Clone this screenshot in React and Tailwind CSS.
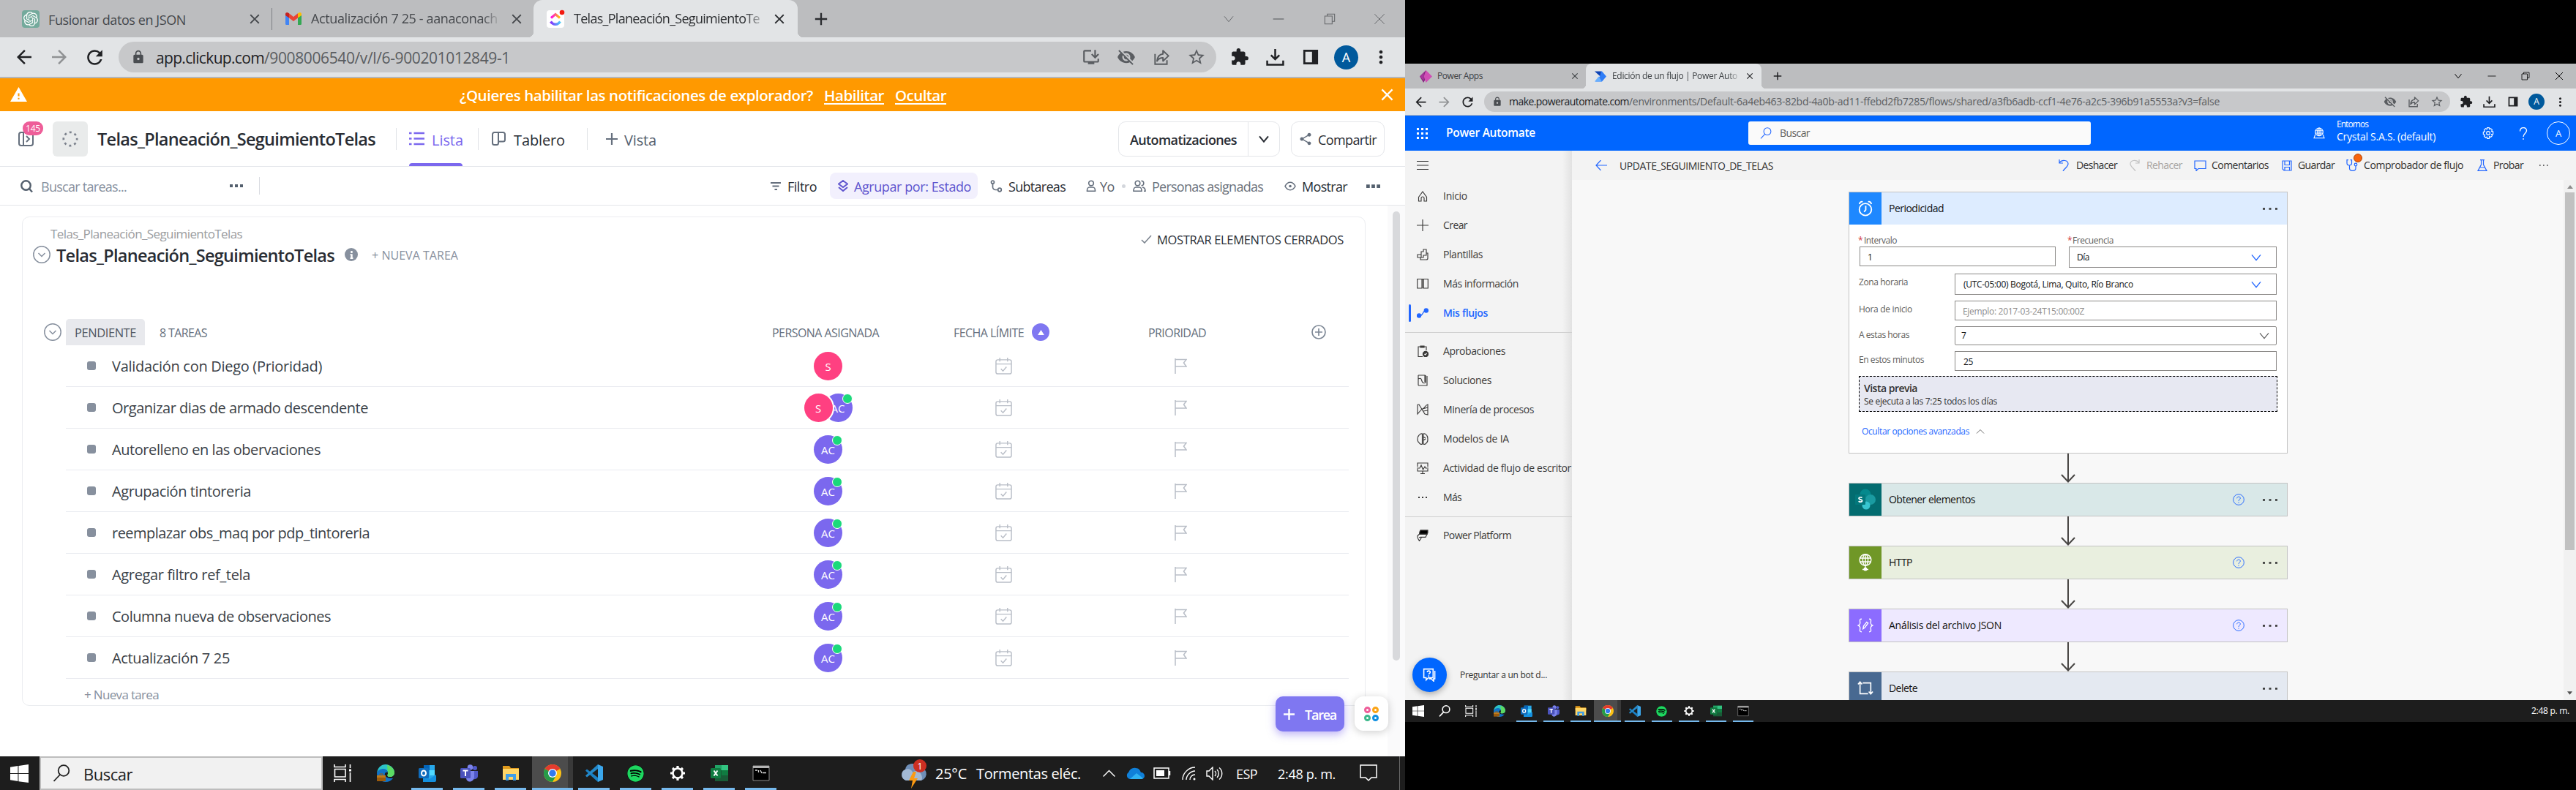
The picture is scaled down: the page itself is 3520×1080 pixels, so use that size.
import React, { useLayoutEffect, useRef } from "react";
import clsx from "clsx";
import {
  MdArrowBack, MdArrowForward, MdRefresh, MdLock, MdInstallDesktop, MdVisibilityOff,
  MdStarBorder, MdExtension, MdMoreVert, MdClose, MdAdd, MdWarning, MdShare,
} from "react-icons/md";
import { SiOpenai } from "react-icons/si";
import { FaSpotify, FaInfo } from "react-icons/fa";

/* Single line of text whose letter spacing is tuned so it fills its box. */
function T({ className, children }) {
  const box = useRef(null);
  const inner = useRef(null);
  useLayoutEffect(() => {
    const n = inner.current.textContent.length;
    inner.current.style.letterSpacing = "0px";
    const natural = inner.current.getBoundingClientRect().width;
    const target = box.current.getBoundingClientRect().width;
    inner.current.style.letterSpacing = `${(target - natural) / n}px`;
  });
  return (
    <span ref={box} data-fit="" className={clsx("block shrink-0 whitespace-pre leading-none", className)}>
      <span ref={inner} className="inline-block">{children}</span>
    </span>
  );
}

function Svg({ className, vb = "0 0 24 24", sw = 2, children }) {
  return (
    <svg viewBox={vb} className={clsx("shrink-0", className)} fill="none" stroke="currentColor" strokeWidth={sw}>
      {children}
    </svg>
  );
}

/* ---------- browser icons ---------- */
const ShareOut = ({ className }) => (
  <Svg className={className} sw={1.8}>
    <path d="M4 8v13h15v-5" />
    <path d="M14 4l7 6.500-7 6.500v-4c-4 0-6 1.500-7.500 4C7 12 9 8.500 14 8z" strokeLinejoin="round" />
  </Svg>
);
const Download = ({ className }) => (
  <Svg className={className} sw={2.4}><path d="M12 1v13M6.500 9l5.500 5.500L17.500 9M1.500 16v5.500h21V16" /></Svg>
);
const Panel = ({ className }) => (
  <Svg className={className} sw={3}><path d="M2.500 2.500h19v19h-19z" /><path d="M14 2h8v20h-8z" fill="currentColor" stroke="none" /></Svg>
);
const ChevDown = ({ className, sw = 1.5 }) => (
  <Svg className={className} sw={sw}><path d="M3 6.500l9 11 9-11" /></Svg>
);
const ChevUp = ({ className, sw = 1.5 }) => (
  <Svg className={className} sw={sw}><path d="M2 17L12 7l10 10" /></Svg>
);
const Minus = ({ className }) => <Svg className={className} sw={1.6}><path d="M1 12h22" /></Svg>;
const Restore = ({ className }) => (
  <Svg className={className} sw={1.6}><path d="M2 6h15v16H2zM7 6V2h15v15h-5" /></Svg>
);
const Cross = ({ className, sw = 1.5 }) => <Svg className={className} sw={sw}><path d="M2 2l20 20M22 2L2 22" /></Svg>;

const Gmail = ({ className }) => (
  <svg viewBox="0 0 22 17" className={clsx("shrink-0", className)}>
    <path d="M0 2v13.500A1.500 1.500 0 001.500 17H5V7z" fill="#4285f4" />
    <path d="M22 2v13.500a1.500 1.500 0 01-1.500 1.500H17V7z" fill="#34a853" />
    <path d="M0 2.500C0 0 2.500-.6 4.200.7L5 1.300V7.500L0 4z" fill="#c5221f" />
    <path d="M22 2.500C22 0 19.500-.6 17.800.7L17 1.300V7.500L22 4z" fill="#fbbc04" />
    <path d="M5 1.300l6 4.700 6-4.700v6.200L11 12 5 7.500z" fill="#ea4335" />
  </svg>
);
const ClickUp = () => (
  <svg viewBox="0 0 24 24" className="size-6 shrink-0 overflow-visible">
    <defs>
      <linearGradient id="cuA"><stop stopColor="#ff02f0" /><stop offset="1" stopColor="#ffc800" /></linearGradient>
      <linearGradient id="cuB"><stop stopColor="#8930fd" /><stop offset="1" stopColor="#49ccf9" /></linearGradient>
    </defs>
    <rect width="24" height="24" rx="4" fill="#fff" />
    <path d="M6 10.500l6-5 6 5" fill="none" stroke="url(#cuA)" strokeWidth="3.200" />
    <path d="M5.500 15.500c3.500 5 9.500 5 13 0" fill="none" stroke="url(#cuB)" strokeWidth="3.400" />
    <circle cx="21" cy="3" r="3.300" fill="#f31b10" />
  </svg>
);
const PowerApps = () => (
  <svg viewBox="0 0 18 18" className="w-[17px] h-[17px] shrink-0">
    <path d="M9 0L0 9l5.500 9L9 12z" fill="#862781" /><path d="M9 0l9 9-9 9-3-9z" fill="#d04fb5" /><path d="M6 3v12L0 9z" fill="#a6359b" />
  </svg>
);
const PowerAutomate = () => (
  <svg viewBox="0 0 16 14" className="w-4 h-[15px] shrink-0">
    <path d="M0 0h9l4 5-3 4z" fill="#0c42b5" /><path d="M9 0h1l6 7-6 7H1l6-7z" fill="#2f7df6" /><path d="M0 14l5.500-7L10 14z" fill="#68b0ff" />
  </svg>
);

/* ---------- taskbar icons ---------- */
const Win = ({ className }) => (
  <svg viewBox="0 0 24 24" className={clsx("shrink-0", className)} fill="#fff">
    <path d="M0 3.500L10 2v9.500H0zM11 1.800L24 0v11.500H11zM0 12.500h10V22L0 20.500zM11 12.500h13V24l-13-1.800z" />
  </svg>
);
const Loupe = ({ className, sw = 1.6 }) => (
  <Svg className={className} sw={sw}><circle cx="15" cy="8.500" r="7.300" /><path d="M10 14L1.500 23" /></Svg>
);
const TaskView = ({ className }) => (
  <Svg className={className} sw={1.6}>
    <path d="M1 0v3.500h15V0M1 24v-3.500h15V24M1.500 6.500h14.500v10.500H1.500zM22.500 0v5M22.500 11v13" /><path d="M21 6.500h3v3h-3z" fill="currentColor" stroke="none" />
  </Svg>
);
const icons = {
  edge: (
    <>
      <path d="M0 12C1 4 6 0 12 0s12 5 12 11c0 4-3 6-6 6-4 0-4-2-3-4 1-3-2-6-5-6C5 7 1 9 0 12z" fill="#2cc3c9" />
      <path d="M14 1c6 1 10 6 10 10 0 4-3 6-6 6-4 0-4-2-3-4z" fill="#5cdb63" />
      <path d="M0 12c1-4 5-6 9-6 3 0 5 2 6 5-6-2-7 9 7 8-2 3-6 5-10 5C5 24 0 19 0 12z" fill="#1173c7" />
      <path d="M0 15h12v8H0z" fill="#c07a1a" /><path d="M0 18h12v5H0z" fill="#9a5a0c" /><path d="M4 15v-2h4v2" fill="none" stroke="#9a5a0c" />
    </>
  ),
  outlook: (
    <>
      <path d="M7 1h15v20H7z" fill="#28a8ea" /><path d="M7 1h8v7H7z" fill="#0364b8" /><path d="M15 8h7v7h-7z" fill="#50d9ff" />
      <path d="M6 24V14l9 6 9-6v8a2 2 0 01-2 2z" fill="#1490df" /><rect y="5" width="14" height="14" rx="1.500" fill="#0f6cbd" />
      <ellipse cx="7" cy="12" rx="3" ry="3.500" fill="none" stroke="#fff" strokeWidth="2" />
    </>
  ),
  teams: (
    <>
      <circle cx="20" cy="5" r="3" fill="#5059c9" /><circle cx="13.500" cy="4" r="3.800" fill="#7b83eb" />
      <path d="M16 9h8v7c0 4-6 6-8 2z" fill="#5059c9" /><path d="M8 9h11v8c0 8-11 9-11 1z" fill="#7b83eb" />
      <rect y="5" width="14" height="14" rx="1.500" fill="#4b53bc" /><path d="M3.500 8.500h7M7 8.500V16" stroke="#fff" strokeWidth="2" />
    </>
  ),
  files: (
    <>
      <path d="M1 2h9l2 3h11v6H1z" fill="#e09a1c" /><path d="M1 6h22v15H1z" fill="#ffd667" />
      <path d="M5 22v-9h14v9h-4v-5H9v5z" fill="#3f9ee8" />
    </>
  ),
  chrome: (
    <>
      <circle cx="12" cy="12" r="12" fill="#fbc116" /><path d="M12 12L1.600 6A12 12 0 0112 0a12 12 0 0110.400 6z" fill="#e33b2e" />
      <path d="M1.600 6A12 12 0 0012 24l5-9-5-3z" fill="#269b48" /><circle cx="12" cy="12" r="6" fill="#fff" /><circle cx="12" cy="12" r="4.700" fill="#317af0" />
    </>
  ),
  code: (
    <>
      <path d="M17 24L1.500 10 0 8.500 2 6.500 17 18z" fill="#1a80c4" /><path d="M17 0L1.500 14 0 15.500 2 17.500 17 6z" fill="#2489ca" />
      <path d="M17 0l7 3v18l-7 3z" fill="#3ba7ec" />
    </>
  ),
  cog: (
    <>
      <circle cx="12" cy="12" r="6.500" fill="none" stroke="#fff" strokeWidth="2.600" />
      <path d="M12 2v4M12 18v4M2 12h4M18 12h4M5 5l2.800 2.800M16.200 16.200L19 19M5 19l2.800-2.800M16.200 7.800L19 5" stroke="#fff" strokeWidth="3.200" />
    </>
  ),
  excel: (
    <>
      <path d="M6 1h18v22H6z" fill="#185c37" /><path d="M6 1h9v7H6z" fill="#21a366" /><path d="M15 1h9v7h-9z" fill="#33c481" /><path d="M15 8h9v7h-9z" fill="#107c41" />
      <rect y="5" width="14" height="14" rx="1.500" fill="#107c41" /><path d="M4.500 8.500l5 7M9.500 8.500l-5 7" stroke="#fff" strokeWidth="2" />
    </>
  ),
  cmd: (
    <>
      <path d="M1 2h22v20H1z" fill="#000" stroke="#8d8d8d" /><path d="M1 2h22v3H1z" fill="#b4b4b4" />
      <path d="M4 8h3M8.500 8v3M11 8l2 4M14 11.500h5" stroke="#ddd" strokeWidth="1.300" />
    </>
  ),
};
const apps = ["edge", "outlook", "teams", "files", "chrome", "code", "spotify", "cog", "excel", "cmd"];

function TaskApps({ big }) {
  return apps.map((name) => (
    <div
      key={name}
      className={clsx("relative flex items-center justify-center shrink-0 h-full", big ? "w-[57px]" : "w-[37px]")}
    >
      {name === "chrome" && (
        <>
          <span className={clsx("absolute inset-y-0 bg-[#393939]", big ? "left-[1px] w-[56px]" : "left-0 w-[37px]")} />
          <span className={clsx("absolute inset-y-0 bg-[#4c4c4c]", big ? "left-[1px] w-[49px]" : "left-0 w-[32px]")} />
        </>
      )}
      {name === "spotify" ? (
        <span className={clsx("relative rounded-full bg-black flex", big ? "size-[23px]" : "size-[15px]")}>
          <FaSpotify className="size-full text-[#1ed760]" />
        </span>
      ) : (
        <svg viewBox="0 0 24 24" className={clsx("relative", big ? "size-6" : "size-4")}>{icons[name]}</svg>
      )}
      {name !== "edge" && (
        <span
          className={clsx(
            "absolute bottom-0 bg-[#76b9ed]",
            big ? "h-[3px]" : "h-[2px]",
            name === "chrome" ? (big ? "left-[1px] w-[56px]" : "left-0 w-[37px]") : big ? "w-[43px]" : "w-[28px]"
          )}
        />
      )}
    </div>
  ));
}

/* ---------- ClickUp ---------- */
const Avatar = ({ kind, className }) => (
  <span
    className={clsx(
      "relative flex items-center justify-center size-[39px] shrink-0 rounded-full text-[15px] text-white",
      kind === "S" ? "bg-[#ff4081]" : "bg-[#7b68ee]",
      className
    )}
  >
    <T className={kind === "S" ? "w-[8px]" : "w-[19px]"}>{kind}</T>
    {kind === "AC" && (
      <span className="absolute right-0 top-0 size-[14px] rounded-full border border-white bg-[#1bd97b]" />
    )}
  </span>
);

const tasks = [
  ["Validación con Diego (Prioridad)", "w-[287px]", ["S"]],
  ["Organizar dias de armado descendente", "w-[350px]", ["S", "AC"]],
  ["Autorelleno en las obervaciones", "w-[285px]", ["AC"]],
  ["Agrupación tintoreria", "w-[190px]", ["AC"]],
  ["reemplazar obs_maq por pdp_tintoreria", "w-[352px]", ["AC"]],
  ["Agregar filtro ref_tela", "w-[189px]", ["AC"]],
  ["Columna nueva de observaciones", "w-[299px]", ["AC"]],
  ["Actualización 7 25", "w-[161px]", ["AC"]],
];

function TaskRow({ name, width, people }) {
  return (
    <div className="ml-[59px] w-[1753px] h-[57px] border-b border-[#e9ebf0] flex items-center">
      <span className="ml-[29px] size-3 rounded-[3px] bg-[#87909e]" />
      <div className="ml-[22px] w-[930px]">
        <T className={clsx("text-[20px] text-[#3a3f47]", width)}>{name}</T>
      </div>
      <div className="w-[97px] flex justify-center">
        {people.map((p, i) => (
          <Avatar
            key={p}
            kind={p}
            className={people.length > 1 ? (i === 0 ? "z-10 ring-2 ring-white" : "-ml-[12px]") : ""}
          />
        ))}
      </div>
      <Svg className="ml-[180px] w-[23px] h-[23px] text-[#b9bec7]" sw={1.5}>
        <rect x="1" y="3" width="22" height="20" rx="2.500" /><path d="M1 9h22M6.500 0v5.500M17.500 0v5.500M8 16l3 3 5-6" />
      </Svg>
      <Svg className="ml-[222px] w-[17px] h-[21px] text-[#b9bec7]" vb="0 0 17 21" sw={1.5}>
        <path d="M1 0v21M1 1.500h15l-3.500 4.500 3.500 5H1" />
      </Svg>
    </div>
  );
}

const CircleChevron = ({ className }) => (
  <Svg className={clsx("size-6 text-[#87909e]", className)} sw={1.5}>
    <circle cx="12" cy="12" r="11.200" /><path d="M7.500 10l4.500 4.500 4.500-4.500" />
  </Svg>
);

function ClickUpScreen() {
  return (
    <div className="w-[1920px] h-[1080px] shrink-0 flex flex-col bg-white **:data-fit:pt-[2px]">
      <div className="h-[51px] shrink-0 flex items-center bg-[#bcbdbf] text-[18px] text-[#45484c]">
        <span className="ml-[30px] size-6 rounded bg-[#74aa9c] flex items-center justify-center shrink-0">
          <SiOpenai className="size-5 text-white" />
        </span>
        <T className="ml-3 w-[188px]">Fusionar datos en JSON</T>
        <MdClose className="ml-[83px] size-[22px] shrink-0" />
        <span className="ml-3 w-px h-[30px] bg-[#7d8084]" />
        <Gmail className="ml-[18px] w-[22px] h-[17px]" />
        <T className="ml-[13px] pb-[3px] w-[255px] [mask-image:linear-gradient(to_right,black_92%,transparent_102%)]">Actualización 7 25 - aanaconach</T>
        <MdClose className="ml-[15px] size-[22px] shrink-0" />
        <div className="relative ml-3 w-[361px] h-full shrink-0 rounded-t-[12px] bg-[#e2e4e6] text-[#2b2d30] flex items-center">
          <span className="absolute bottom-0 -left-2 size-2 bg-[radial-gradient(circle_at_0_0,transparent_8px,#e2e4e6_8.5px)]" />
          <span className="absolute bottom-0 -right-2 size-2 bg-[radial-gradient(circle_at_100%_0,transparent_8px,#e2e4e6_8.5px)]" />
          <span className="ml-[18px] shrink-0"><ClickUp /></span>
          <T className="ml-[13px] pb-[3px] w-[254px] [mask-image:linear-gradient(to_right,black_92%,transparent_104%)]">Telas_Planeación_SeguimientoTe</T>
          <MdClose className="ml-4 size-[22px] shrink-0" />
        </div>
        <MdAdd className="ml-[18px] size-7 shrink-0 text-[#2b2d30]" />
        <ChevDown className="ml-[535px] size-4 text-[#66686b]" />
        <Minus className="ml-[52px] size-4 text-[#55585b]" />
        <Restore className="ml-[54px] size-4 text-[#66686b]" />
        <Cross className="ml-[52px] size-4 text-[#66686b]" />
      </div>

      <div className="h-[56px] shrink-0 flex items-center bg-[#e2e4e6] border-b-2 border-[#b3b5b8] text-[#202124]">
        <MdArrowBack className="ml-[18px] size-[30px] shrink-0" />
        <MdArrowForward className="ml-[18px] size-[30px] shrink-0 text-[#909294]" />
        <MdRefresh className="ml-[18px] size-[31px] shrink-0" />
        <div className="ml-[17px] w-[1500px] h-[42px] shrink-0 rounded-full bg-[#c7c8ca] flex items-center text-[21px] text-[#5a5d61]">
          <MdLock className="ml-[17px] size-5 shrink-0 text-[#4a4d51]" />
          <T className="ml-[14px] w-[148px] text-[#202124]">app.clickup.com</T>
          <T className="w-[336px]">/9008006540/v/l/6-900201012849-1</T>
          <MdInstallDesktop className="ml-[781px] size-[26px] shrink-0" />
          <MdVisibilityOff className="ml-[22px] size-[26px] shrink-0" />
          <ShareOut className="ml-[22px] size-[26px]" />
          <MdStarBorder className="ml-[22px] size-[26px] shrink-0" />
        </div>
        <MdExtension className="ml-[19px] size-[26px] shrink-0" />
        <Download className="ml-[23px] size-[25px]" />
        <Panel className="ml-[25px] size-[22px]" />
        <span className="ml-[21px] size-[33px] shrink-0 rounded-full bg-[#00599c] text-white text-[18px] flex items-center justify-center leading-none">A</span>
        <MdMoreVert className="ml-[17px] size-7 shrink-0" />
      </div>

      <div className="h-[45px] shrink-0 flex items-center bg-[#ff9900] text-white text-[20.5px] font-semibold">
        <MdWarning className="ml-[13px] size-[25px] shrink-0" />
        <T className="ml-[590px] w-[483px]">¿Quieres habilitar las notificaciones de explorador?</T>
        <span className="ml-[15px] pt-[2px] border-b-2 border-white"><T className="w-[82px]">Habilitar</T></span>
        <span className="ml-[15px] pt-[2px] border-b-2 border-white"><T className="w-[70px]">Ocultar</T></span>
        <Cross className="ml-[594px] size-[17px]" sw={3.2} />
      </div>

      <div className="h-[76px] shrink-0 flex items-center border-b border-[#e4e6ea] text-[#292d34]">
        <div className="relative ml-[25px] w-[21px]">
          <Svg className="w-[21px] h-5 text-[#656f7d]" vb="0 0 21 20">
            <rect x="1" y="1" width="19" height="18" rx="3" /><path d="M7 1v18M11 6l4 4-4 4" />
          </Svg>
          <span className="absolute left-[6px] -top-[14px] w-7 h-[19px] rounded-[9px] bg-[#ee5e99] text-white text-[12px] flex items-center justify-center"><T className="w-[20px]">145</T></span>
        </div>
        <span className="ml-[26px] size-12 shrink-0 rounded-md bg-[#e9ebeb] flex items-center justify-center">
          <Svg className="size-[22px] text-[#7c828d]" sw={3}><circle cx="12" cy="12" r="10" strokeDasharray="3.300 4.550" strokeDashoffset="1.600" /></Svg>
        </span>
        <T className="ml-[13px] mt-px w-[380px] text-[23.5px] font-semibold">Telas_Planeación_SeguimientoTelas</T>
        <span className="ml-[28px] w-px h-[30px] bg-[#e0e2e6]" />
        <div className="relative ml-[17px] h-full flex items-center text-[#7b68ee]">
          <Svg className="w-[21px] h-[19px]" vb="0 0 21 19"><path d="M6.500 2H21M6.500 9.500H21M6.500 17H21M0 2h3.500M0 9.500h3.500M0 17h3.500" strokeWidth="2.400" /></Svg>
          <T className="ml-[10px] mt-[2px] w-[43px] text-[20px] font-medium">Lista</T>
          <span className="absolute left-0 bottom-0 h-1 w-[73px] rounded-t bg-[#7b68ee]" />
        </div>
        <span className="ml-[20px] w-px h-[30px] bg-[#e0e2e6]" />
        <Svg className="ml-[18px] w-[19px] h-[19px] text-[#656f7d]" vb="0 0 19 19"><path d="M9 1v14.500a2.500 2.500 0 01-2.500 2.500h-3A2.500 2.500 0 011 15.500v-12A2.500 2.500 0 013.500 1h12A2.500 2.500 0 0118 3.500V11a2.500 2.500 0 01-2.500 2.500H9" /></Svg>
        <T className="ml-[11px] mt-[2px] w-[70px] text-[20px] font-medium">Tablero</T>
        <span className="ml-[30px] w-px h-[30px] bg-[#e0e2e6]" />
        <Svg className="ml-[25px] size-[16px] text-[#656f7d]" vb="0 0 16 16" sw={2.2}><path d="M8 0v16M0 8h16" /></Svg>
        <T className="ml-[9px] mt-[2px] w-[44px] text-[20px] text-[#54606e]">Vista</T>
        <div className="ml-[631px] w-[221px] h-12 shrink-0 rounded-[10px] border border-[#e4e6ea] flex items-center">
          <T className="ml-[15px] w-[146px] text-[18px] font-semibold">Automatizaciones</T>
          <span className="ml-[15px] w-px h-full bg-[#e4e6ea]" />
          <ChevDown className="ml-[13px] size-4" sw={3} />
        </div>
        <div className="ml-[15px] w-[128px] h-12 shrink-0 rounded-[10px] border border-[#e4e6ea] flex items-center">
          <MdShare className="ml-[9px] size-5 text-[#656f7d]" />
          <T className="ml-[7px] w-[80px] text-[18px]">Compartir</T>
        </div>
      </div>

      <div className="h-[53px] shrink-0 flex items-center border-b border-[#e4e6ea] text-[18px] text-[#292d34]">
        <Svg className="ml-[28px] size-[17px] text-[#54606e]" vb="0 0 17 17" sw={2.4}><circle cx="7.500" cy="7.500" r="6.200" /><path d="M12 12l4 4.500" /></Svg>
        <T className="ml-[11px] w-[117px] text-[#87909e]">Buscar tareas...</T>
        <Svg className="ml-[141px] w-[18px] h-1 text-[#54606e]" vb="0 0 18 4"><path d="M0 2h4M7 2h4M14 2h4" strokeWidth="4" /></Svg>
        <span className="ml-[22px] w-px h-6 bg-[#d9dce1]" />
        <Svg className="ml-[698px] w-[14px] h-[11px] text-[#656f7d]" vb="0 0 14 11"><path d="M0 1h14M2.500 5.500h9M5.500 10h3.500" /></Svg>
        <T className="ml-[9px] w-[40px]">Filtro</T>
        <div className="ml-[18px] w-[202px] h-9 shrink-0 rounded-lg bg-[#f2f0fd] flex items-center text-[#5f55ce]">
          <Svg className="ml-[11px] w-[14px] h-[16px]" vb="0 0 14 16"><path d="M7 1l6 4.500L7 10 1 5.500zM1 10l6 5 6-5" /></Svg>
          <T className="ml-[8px] w-[160px]">Agrupar por: Estado</T>
        </div>
        <Svg className="ml-[17px] w-[17px] h-[17px] text-[#656f7d]" vb="0 0 17 17" sw={1.7}><circle cx="3.500" cy="3" r="2" /><path d="M3.500 5v4.500a4 4 0 004 4h3" /><circle cx="13" cy="13.500" r="2.300" /></Svg>
        <T className="ml-[8px] w-[78px]">Subtareas</T>
        <Svg className="ml-[28px] w-[14px] h-[16px] text-[#656f7d]" vb="0 0 14 16" sw={1.6}><circle cx="7" cy="4.500" r="3.300" /><path d="M4.500 10h5c1.500 0 3 2 3 4.500v.7h-11v-.7C1.500 12 3 10 4.500 10z" /></Svg>
        <T className="ml-[5px] w-[20px] text-[#5b626c]">Yo</T>
        <span className="ml-[10px] size-[5px] rounded-full bg-[#d3d6dc]" />
        <Svg className="ml-[10px] w-[18px] h-[16px] text-[#656f7d]" vb="0 0 18 16" sw={1.6}><circle cx="6.500" cy="4.500" r="3.300" /><path d="M4 10h5c1.500 0 3 2 3 4.500v.7H1v-.7C1 12 2.500 10 4 10zM11.500 1.200a3.300 3.300 0 010 6.600M13 10c2.500.3 4 2 4 5.200h-2" /></Svg>
        <T className="ml-[8px] w-[152px] text-[#6b727c]">Personas asignadas</T>
        <Svg className="ml-[29px] w-[16px] h-[13px] text-[#656f7d]" vb="0 0 16 13" sw={1.6}><path d="M1 6.500C4.500-.5 11.500-.5 15 6.500 11.500 13.500 4.500 13.500 1 6.500z" /><circle cx="8" cy="6.500" r="1.800" fill="currentColor" stroke="none" /></Svg>
        <T className="ml-[8px] w-[62px]">Mostrar</T>
        <Svg className="ml-[26px] w-[19px] h-[5px] text-[#54606e]" vb="0 0 20 5"><path d="M0 2.500h5M7.500 2.500h5M15 2.500h5" strokeWidth="5" /></Svg>
      </div>

      <div className="relative h-[753px] shrink-0 flex">
        <div className="w-[1896px]">
          <div className="ml-[30px] mt-[15px] w-[1836px] h-[669px] rounded-[10px] border border-[#ebedf0]">
            <div className="h-[139px] flex">
              <div>
                <T className="ml-[38px] mt-[12px] w-[262px] text-[17px] text-[#9a9ca0]">Telas_Planeación_SeguimientoTelas</T>
                <div className="mt-[8px] h-6 flex items-center">
                  <CircleChevron className="ml-[14px]" />
                  <T className="ml-[8px] mt-px w-[380px] text-[23.5px] font-semibold text-[#292d34]">Telas_Planeación_SeguimientoTelas</T>
                  <span className="ml-[14px] size-[18px] rounded-full bg-[#87909e] flex items-center justify-center"><FaInfo className="size-[11px] text-white" /></span>
                  <T className="ml-[19px] w-[118px] text-[16px] text-[#87909e]">+ NUEVA TAREA</T>
                </div>
              </div>
              <div className="ml-auto mr-[29px] mt-[21px] h-[18px] flex items-center">
                <Svg className="w-[15px] h-[12px] text-[#7d8590]" vb="0 0 15 12" sw={1.6}><path d="M1 7l4 4L14 1" /></Svg>
                <T className="ml-[7px] w-[255px] text-[16.5px] text-[#292d34]">MOSTRAR ELEMENTOS CERRADOS</T>
              </div>
            </div>
            <div className="h-9 flex items-center text-[16px] text-[#656f7d] font-medium">
              <CircleChevron className="ml-[29px]" />
              <span className="ml-[6px] w-[108px] h-9 rounded-t-[5px] bg-[#e8e9ed] flex items-center justify-center font-normal">
                <T className="w-[84px] text-[16.5px] text-[#4f5762]">PENDIENTE</T>
              </span>
              <T className="ml-[20px] w-[65px]">8 TAREAS</T>
              <T className="ml-[772px] w-[146px]">PERSONA ASIGNADA</T>
              <T className="ml-[102px] w-[96px]">FECHA LÍMITE</T>
              <span className="ml-[11px] size-6 rounded-full bg-[#7f77f1] flex items-center justify-center">
                <svg viewBox="0 0 10 8" className="w-[9px] h-[7px]"><path d="M5 0l5 8H0z" fill="#fff" /></svg>
              </span>
              <T className="ml-[135px] w-[79px]">PRIORIDAD</T>
              <Svg className="ml-[144px] size-[20px] text-[#7d8795]" sw={2}><circle cx="12" cy="12" r="10.800" /><path d="M12 6v12M6 12h12" /></Svg>
            </div>
            {tasks.map(([name, width, people]) => (
              <TaskRow key={name} name={name} width={width} people={people} />
            ))}
            <T className="ml-[84px] mt-[11px] w-[102px] text-[17px] text-[#87909e]">+ Nueva tarea</T>
          </div>
        </div>
        <div className="w-6 bg-[#fafafb]">
          <div className="ml-[7px] mt-[8px] w-[10px] h-[614px] rounded-full bg-[#d8d9dc]" />
        </div>
        <div className="absolute left-[1743px] top-[671px] flex">
          <div className="w-[94px] h-12 rounded-[10px] bg-[#7f77f1] shadow-[0_4px_12px_rgba(123,104,238,0.5)] flex items-center text-white">
            <Svg className="ml-[11px] size-[15px]" vb="0 0 15 15" sw={2.4}><path d="M7.500 0v15M0 7.500h15" /></Svg>
            <T className="ml-[14px] w-[43px] text-[18px] font-semibold">Tarea</T>
          </div>
          <div className="ml-[14px] w-[46px] h-[47px] rounded-[12px] bg-white shadow-[0_2px_12px_rgba(0,0,0,0.2)] grid grid-cols-[9px_9px] gap-[2px] place-content-center">
            <span className="size-[9px] rounded-full border-[3px] border-[#ee5e99]" />
            <span className="size-[9px] rounded-full border-[3px] border-[#fba416]" />
            <span className="size-[9px] rounded-full border-[3px] border-[#3db88b]" />
            <span className="size-[9px] rounded-full border-[3px] border-[#1090e0]" />
          </div>
        </div>
      </div>

      <div className="h-[46px] shrink-0 flex items-center bg-[#1d1d1d] text-white text-[20px]">
        <Win className="ml-[14px] size-[25px]" />
        <div className="ml-[15px] w-[387px] h-full shrink-0 border-2 border-[#bdbdbd] bg-[#f1f1f1] flex items-center text-[#222]">
          <Loupe className="ml-[16px] size-6" sw={1.8} />
          <T className="ml-[18px] w-[67px] text-[22px]">Buscar</T>
        </div>
        <TaskView className="ml-[15px] size-6" />
        <div className="ml-[18px] h-full flex"><TaskApps big /></div>
        <div className="relative ml-[162px] w-[37px] h-full shrink-0 flex items-center">
          <svg viewBox="0 0 37 34" className="w-[37px] h-[34px] overflow-visible">
            <path d="M8 27a8 8 0 01-1-15 9 9 0 0117-3 9 9 0 015 18z" fill="#6f8fb8" />
            <path d="M8 27a8 8 0 01-1-15c4-2 9 0 10 4a7 7 0 0110 0c3 4 4 8 2 11z" fill="#a3b9d4" />
            <path d="M18 15l-6 12h5l-2 11 9-14h-5l3-9z" fill="#fb9a13" />
          </svg>
          <span className="absolute left-[18px] top-[4px] size-[18px] rounded-full bg-[#cc2f22] text-[13px] flex items-center justify-center leading-none">1</span>
        </div>
        <T className="ml-[11px] w-[43px]">25°C</T>
        <T className="ml-[13px] w-[143px]">Tormentas eléc.</T>
        <ChevUp className="ml-[29px] size-[19px]" sw={1.8} />
        <svg viewBox="0 0 25 17" className="ml-[14px] w-[25px] h-[17px] shrink-0"><path d="M5 16A5 5 0 013 7C5 2 9 0 13 1c4 0 6 3 7 6 3 0 5 2 5 5 0 2-2 4-4 4z" fill="#1080d9" /><path d="M5 16l9-8 9 7-2 1z" fill="#2fb2f2" /></svg>
        <Svg className="ml-[12px] w-[24px] h-[16px]" vb="0 0 24 16" sw={1.5}><path d="M1 1h20v14H1zM22.500 5v6" /><path d="M4 4h11v8H4z" fill="#fff" stroke="none" /></Svg>
        <Svg className="ml-[15px] w-[19px] h-[19px]" vb="0 0 19 19" sw={1.4}><path d="M1 18C1 9 9 1 18 1M6 18C6 12 12 6 18 6M11 18c0-4 3-7 7-7" /><circle cx="17" cy="17" r="1.500" fill="#fff" stroke="none" /></Svg>
        <Svg className="ml-[14px] w-[23px] h-[19px]" vb="0 0 23 19" sw={1.4}><path d="M1 6h3l5-5v17l-5-5H1zM12 6c2 2 2 5 0 7M15 4c3 3 3 8 0 11M18 1.500c5 4 5 12 0 16" /></Svg>
        <T className="ml-[18px] w-[29px] text-[18px]">ESP</T>
        <T className="ml-[28px] w-[79px] text-[18px]">2:48 p. m.</T>
        <Svg className="ml-[33px] w-[24px] h-[24px]" sw={1.5}><path d="M1 1h22v17h-7l-4 4-4-4H1z" /></Svg>
        <span className="ml-[30px] w-px h-full bg-[#6a6a6a]" />
      </div>
    </div>
  );
}

/* ---------- Power Automate ---------- */
const navTop = [
  ["Inicio", "w-[33px]", <path d="M2.500 9.500L8 2l5.500 7.500V15H10v-4a2 2 0 00-4 0v4H2.500z" />],
  ["Crear", "w-[33px]", <path d="M8 0v16M0 8h16" />],
  ["Plantillas", "w-[54px]", <path d="M6 4h3V1h4v8H9v3H6zM6 8H1v4h4v3h8a2 2 0 002-2V6h-2" />],
  ["Más información", "w-[103px]", <path d="M.7 1.500H7V14H.7zM7 1.500h1.500V14M9 1.500h6.300V14H9z" />],
];
const navMid = [
  ["Aprobaciones", "w-[85px]", <><path d="M13 7V2H2v13.500h6M5 1h5v2H5z" /><circle cx="12" cy="12" r="3.600" fill="currentColor" /><path d="M10.500 12l1 1 2-2" stroke="#fff" /></>],
  ["Soluciones", "w-[66px]", <path d="M2 1h9v9M2 1v13a1 1 0 001 1h11V2M2 6c4-2 4 0 5 3s3 3 5 2V1" />],
  ["Minería de procesos", "w-[124px]", <path d="M1 1v13l6-7M1 1h2l8 13 4 1V1c-4 1-5 7-8 6M9 10l6-1M8 7l7-2" />],
  ["Modelos de IA", "w-[90px]", <path d="M7.500 15V1C4 0 4 3 3 3 1 5 1 6 1 8s0 4 2 5c1 2 3 3 4.500 2zM9 15V1c3-1 4 2 4.500 2 2 2 2 9 0 10-1 2-3 3-4.500 2zM9 10l3-2M9 5l3 2" />],
  ["Actividad de flujo de escritor", "w-[175px]", <path d="M1 6V1h14v5M1 9v3h14V9M5 15.500h6M8 12v3M0 8h4l2-4 2.500 6L11 6l1 2h4" />],
  ["Más", "w-[25px]", <path d="M2 8h2M7 8h2M12 8h2" strokeWidth="2.200" />],
];
const NavItem = ({ label, width, icon, active }) => (
  <div className="h-10 shrink-0 flex items-center text-[14px] text-[#3b3a39]">
    <span className={clsx("ml-[5px] w-[3px] h-6 rounded-sm shrink-0", active && "bg-[#2266ff]")} />
    <Svg className={clsx("ml-2 size-4", active && "text-[#2266ff]")} vb="0 0 16 16" sw={1.15}>{icon}</Svg>
    <T className={clsx("ml-5", width, active && "font-semibold text-[#2266ff]")}>{label}</T>
  </div>
);

const Dots = ({ className }) => (
  <Svg className={clsx("w-5 h-[3px] text-[#333]", className)} vb="0 0 20 3">
    <path d="M0 1.500h3M8.500 1.500h3M17 1.500h3" strokeWidth="2.600" />
  </Svg>
);
const FlowArrow = () => (
  <Svg className="ml-[290px] w-5 h-10 text-[#484644]" vb="0 0 20 40" sw={2}><path d="M10 0v39M1 29l9 9.500 9-9.500" /></Svg>
);

const steps = [
  ["Obtener elementos", "w-[118px]", "bg-[#036c70]", "bg-[#d9e8e8]", true, (
    <svg viewBox="0 0 30 30" className="size-[30px]">
      <circle cx="15" cy="8" r="7.500" fill="#04898d" /><circle cx="22" cy="15" r="7" fill="#1a9ba1" /><circle cx="16" cy="23" r="5.500" fill="#37c6d0" />
      <rect x="1" y="8" width="14" height="14" rx="1" fill="#03787c" /><path d="M10.500 12.500c-1-1-4.500-1.200-4.500.8s4.600 1.200 4.600 3.300-3.600 2-4.900.6" fill="none" stroke="#fff" strokeWidth="1.700" />
    </svg>
  )],
  ["HTTP", "w-[32px]", "bg-[#709727]", "bg-[#e9efdf]", true, (
    <Svg className="size-6 text-white" sw={1.4}><circle cx="12" cy="8.500" r="7.800" /><ellipse cx="12" cy="8.500" rx="3.600" ry="7.800" /><path d="M4.500 6h15M4.500 11h15M12 .5v21M8 21.500h8" /><circle cx="12" cy="21" r="1.800" fill="#fff" /></Svg>
  )],
  ["Análisis del archivo JSON", "w-[154px]", "bg-[#8c6cff]", "bg-[#eee9ff]", true, (
    <Svg className="size-[22px] text-white" sw={1.5}>
      <path d="M6.500 2.500C2 2.500 4.500 6 4 9c-.3 2-2.500 3-2.500 3s2.200 1 2.500 3c.5 3-2 6.500 2.500 6.500M17.500 2.500c4.500 0 2 3.500 2.500 6.500.3 2 2.500 3 2.500 3s-2.200 1-2.500 3c-.5 3 2 6.500-2.500 6.500M8.500 17l.8-4L14 7l2 1.500-4.700 6.500z" />
    </Svg>
  )],
  ["Delete", "w-[39px]", "bg-[#486991]", "bg-[#e4e9f1]", false, (
    <Svg className="size-[22px] text-white" sw={1.8}><path d="M4 3v17h12M1 6l3-3.500L7 6M8 4h12v16M17 17l3 3.500 3-3.500" /></Svg>
  )],
];

function Step({ title, width, tile, body, help, icon }) {
  return (
    <div className={clsx("w-[600px] h-[46px] shrink-0 border border-[#c3c3c3] flex items-center", body)}>
      <span className={clsx("w-[44px] h-full shrink-0 flex items-center justify-center", tile)}>{icon}</span>
      <T className={clsx("ml-[10px] text-[14px] text-[#111]", width)}>{title}</T>
      <span className="ml-auto" />
      {help && (
        <Svg className="size-4 text-[#2266ff]" sw={1.4}><circle cx="12" cy="12" r="11" /><path d="M8.500 9.500c0-4.500 7-4.500 7-.5 0 3-3.500 2.500-3.500 6M12 17v2" /></Svg>
      )}
      <Dots className="ml-[25px] mr-[13px]" />
    </div>
  );
}

const Field = ({ label, lw, height, gap, children }) => (
  <div className={clsx("flex items-start shrink-0", gap)}>
    <div className="w-[131px]"><T className={clsx("mt-[6px] text-[12px] text-[#605e5c]", lw)}>{label}</T></div>
    <div className={clsx("w-[440px] border border-[#8a8886] bg-white flex items-center text-[12px] text-[#111]", height)}>{children}</div>
  </div>
);

function PowerAutomateScreen() {
  return (
    <div className="mt-[87px] w-[1600px] h-[900px] shrink-0 flex flex-col overflow-hidden bg-[#f8f8f8]">
      <div className="h-[34px] shrink-0 flex items-center bg-[#bcbdbf] text-[12px] text-[#3c4043]">
        <span className="ml-5 shrink-0"><PowerApps /></span>
        <T className="ml-[7px] w-[62px]">Power Apps</T>
        <MdClose className="ml-[119px] size-[14px] shrink-0" />
        <div className="relative ml-2 w-[240px] h-full shrink-0 rounded-t-lg bg-[#e2e4e6] flex items-center">
          <span className="absolute bottom-0 -left-1.5 size-1.5 bg-[radial-gradient(circle_at_0_0,transparent_6px,#e2e4e6_6.5px)]" />
          <span className="absolute bottom-0 -right-1.5 size-1.5 bg-[radial-gradient(circle_at_100%_0,transparent_6px,#e2e4e6_6.5px)]" />
          <span className="ml-3 shrink-0"><PowerAutomate /></span>
          <T className="ml-2 py-1 w-[171px] [mask-image:linear-gradient(to_right,black_92%,transparent_103%)]">Edición de un flujo | Power Auto</T>
          <MdClose className="ml-[10px] size-[14px] shrink-0 text-[#202124]" />
        </div>
        <MdAdd className="ml-[13px] size-[18px] shrink-0 text-[#202124]" />
        <ChevDown className="ml-[915px] size-3 text-black" sw={2} />
        <Minus className="ml-[34px] size-3 text-black" />
        <Restore className="ml-[34px] size-3 text-black" />
        <Cross className="ml-[34px] size-3 text-black" sw={2} />
      </div>

      <div className="h-[37px] shrink-0 flex items-center bg-[#e2e4e6] border-b border-[#b9bbbe] text-[#202124]">
        <MdArrowBack className="ml-[11px] size-[21px] shrink-0" />
        <MdArrowForward className="ml-[11px] size-[21px] shrink-0 text-[#909294]" />
        <MdRefresh className="ml-[11px] size-[21px] shrink-0" />
        <div className="ml-[12px] w-[1320px] h-7 shrink-0 rounded-full bg-[#c7c8ca] flex items-center text-[14px] text-[#5a5d61]">
          <MdLock className="ml-[11px] size-[14px] shrink-0 text-[#4a4d51]" />
          <T className="ml-[9px] w-[164px] text-[#202124]">make.powerautomate.com</T>
          <T className="w-[807px]">/environments/Default-6a4eb463-82bd-4a0b-ad11-ffebd2fb7285/flows/shared/a3fb6adb-ccf1-4e76-a2c5-396b91a5553a?v3=false</T>
          <MdVisibilityOff className="ml-[224px] size-[18px] shrink-0" />
          <ShareOut className="ml-[14px] size-[18px]" />
          <MdStarBorder className="ml-[14px] size-[18px] shrink-0" />
        </div>
        <MdExtension className="ml-[13px] size-[18px] shrink-0" />
        <Download className="ml-[14px] size-[17px]" />
        <Panel className="ml-[17px] size-[14px]" />
        <span className="ml-[14px] size-[22px] shrink-0 rounded-full bg-[#00599c] text-white text-[12px] flex items-center justify-center leading-none">A</span>
        <MdMoreVert className="ml-[12px] size-[19px] shrink-0" />
      </div>

      <div className="h-12 shrink-0 flex items-center bg-[#0066ff] text-white text-[14px]">
        <div className="ml-4 grid grid-cols-3 gap-[3px] shrink-0">
          {Array.from({ length: 9 }, (_, i) => <span key={i} className="size-[3px] bg-white" />)}
        </div>
        <T className="ml-[25px] w-[122px] text-[15.5px] font-semibold">Power Automate</T>
        <div className="ml-[291px] w-[468px] h-8 shrink-0 rounded-[3px] bg-[#fafafa] flex items-center text-[#605e5c]">
          <Loupe className="ml-4 size-4 text-[#2266ff]" />
          <T className="ml-[11px] w-[41px]">Buscar</T>
        </div>
        <Svg className="ml-[304px] size-4" sw={1.6}><circle cx="12" cy="9.500" r="8" /><ellipse cx="12" cy="9.500" rx="3.500" ry="8" /><path d="M4 7h16M4 12h16M12 1.500v16M4 15l-2.500 7h21L20 15" /></Svg>
        <div className="ml-4 -mt-[6px]">
          <T className="w-[43px] text-[12px]">Entornos</T>
          <T className="mt-[4px] w-[135px]">Crystal S.A.S. (default)</T>
        </div>
        <Svg className="ml-[64px] size-4" sw={1.7}>
          <path d="M10 1h4l.7 3 2.600-1.500 3 3L18.800 8l3.200.8v5l-3.200.7 1.500 2.800-3 3-2.600-1.600L14 23h-4l-.7-3.300L6.700 21.300l-3-3 1.500-2.800L2 14.500v-5l3.200-.7L3.700 5.500l3-3L9.300 4z" /><circle cx="12" cy="12" r="3.500" />
        </Svg>
        <Svg className="ml-[34px] w-[12px] h-[17px]" vb="0 0 12 17" sw={1.3}><path d="M1.500 5.500c0-6.500 9-6.300 9-1 0 3.500-4.500 4-4.500 8.500M6 15v2" /></Svg>
        <span className="ml-[26px] size-8 shrink-0 rounded-full border border-white flex items-center justify-center text-[13px] leading-none">A</span>
      </div>

      <div className="h-[751px] shrink-0 flex">
        <div className="w-[228px] shrink-0 overflow-hidden flex flex-col bg-[linear-gradient(to_right,#f3f3f3_215px,#e2e2e2_228px)]">
          <Svg className="ml-4 mt-[12px] w-4 h-[16px] text-[#333]" vb="0 0 16 16" sw={1.1}><path d="M0 2.500h16M0 8h16M0 13.500h16" /></Svg>
          <div className="mt-[14px] flex flex-col">
            {navTop.map(([l, w, i]) => <NavItem key={l} label={l} width={w} icon={i} />)}
            <NavItem active label="Mis flujos" width="w-[61px]" icon={<><circle cx="3" cy="11.500" r="2.600" fill="currentColor" /><circle cx="12.800" cy="4.500" r="2.600" fill="currentColor" /><path d="M3 11.500c6 2 4-7 10-7" strokeWidth="1.300" /></>} />
          </div>
          <span className="mt-[6px] h-px shrink-0 bg-[#cfcfcf]" />
          <div className="mt-[5px] flex flex-col">
            {navMid.map(([l, w, i]) => <NavItem key={l} label={l} width={w} icon={i} />)}
          </div>
          <span className="mt-[6px] h-px shrink-0 bg-[#cfcfcf]" />
          <div className="mt-[5px] flex flex-col">
            <NavItem label="Power Platform" width="w-[93px]" icon={<><path d="M5 .8h10v3.500l-1 2H3.500L4 3z" fill="#000" /><path d="M3.500 6.300H14l-2 4H4.500M3 6.500L.8 9l.7 3 2 3.500 3-5H3" /></>} />
          </div>
          <div className="mt-[147px] flex items-center">
            <span className="ml-[10px] size-[47px] shrink-0 rounded-full bg-[#0066ff] shadow-[0_3px_8px_rgba(0,0,0,0.3)] flex items-center justify-center">
              <Svg className="size-[19px] text-white" sw={2}><path d="M2 2h16v15h-8l-4 4v-4H2zM21 5v14h-2v4l-4-4h-4" /><path d="M8 7.500c0-3 5-3 5 0 0 2-2.500 2-2.500 4M10.500 13v2" /></Svg>
            </span>
            <T className="ml-[18px] w-[119px] text-[12px] text-[#323130]">Preguntar a un bot d...</T>
          </div>
        </div>

        <div className="w-[1372px] shrink-0 flex flex-col">
          <div className="h-10 shrink-0 flex items-center bg-[#f3f3f3] text-[14px] text-[#323130]">
            <Svg className="ml-8 w-4 h-[14px] text-[#2266ff]" vb="0 0 16 14" sw={1.2}><path d="M7.500 0L1 7l6.500 7M1 7h15" /></Svg>
            <T className="ml-[17px] pt-px w-[210px]">UPDATE_SEGUIMIENTO_DE_TELAS</T>
            <Svg className="ml-[390px] w-[14px] h-4 text-[#2266ff]" vb="0 0 14 16" sw={1.2}><path d="M1 0v5h5M1 4.500C5-.5 13 1 13 6c0 4-5 6-7 10" /></Svg>
            <T className="ml-[10px] w-[56px]">Deshacer</T>
            <Svg className="ml-[17px] w-[14px] h-4 text-[#c2c2c2]" vb="0 0 14 16" sw={1.2}><path d="M13 0v5H8M13 4.500C9-.5 1 1 1 6c0 4 5 6 7 10" /></Svg>
            <T className="ml-[9px] w-[49px] text-[#a6a4a2]">Rehacer</T>
            <Svg className="ml-4 w-[17px] h-[15px] text-[#2266ff]" vb="0 0 17 15" sw={1.2}><path d="M1 1h15v10.500H6L3 14.500v-3H1z" /></Svg>
            <T className="ml-[7px] w-[78px]">Comentarios</T>
            <Svg className="ml-[18px] w-[14px] h-[15px] text-[#2266ff]" vb="0 0 14 15" sw={1.2}><path d="M1 1h12v13H3l-2-2zM4 1v5.500h6.500V1M4 14V9.500h6.500V14" /></Svg>
            <T className="ml-2 w-[50px]">Guardar</T>
            <div className="relative ml-4 shrink-0">
              <Svg className="w-4 h-4 text-[#2266ff]" vb="0 0 16 16" sw={1.2}><path d="M3 .6H1V5c0 4 6.500 4 6.500 0V.6h-2M4.500 8v4c0 4.500 8.500 4.500 8.500 0V9" /><circle cx="13" cy="7" r="1.800" /></Svg>
              <span className="absolute left-[10px] -top-[8px] size-3 rounded-full bg-[#f7630c] border border-[#b0480a]" />
            </div>
            <T className="ml-2 w-[136px]">Comprobador de flujo</T>
            <Svg className="ml-[19px] w-[14px] h-4 text-[#2266ff]" vb="0 0 14 16" sw={1.2}><path d="M4 .6h6M5.500.6V7L1 15.400h12L8.500 7V.6M3 11h8" /></Svg>
            <T className="ml-2 w-[41px]">Probar</T>
            <Svg className="ml-[22px] w-[12px] h-[2px] text-[#666]" vb="0 0 12 2"><path d="M0 1h1.600M5 1h1.600M10 1h1.600" /></Svg>
          </div>

          <div className="h-[711px] shrink-0 flex">
            <div className="w-[1355px] overflow-hidden flex flex-col">
              <div className="ml-[378px] mt-4 flex flex-col">
                <div className="w-[600px] h-[358px] shrink-0 border border-[#c3c3c3] bg-white flex flex-col">
                  <div className="h-[44px] shrink-0 flex items-center bg-[#ddecff]">
                    <span className="w-[44px] h-full shrink-0 bg-[#1e88ff] flex items-center justify-center">
                      <Svg className="size-[22px] text-white" sw={2}><circle cx="12" cy="13.500" r="9" /><path d="M12.500 8v6l-2.500 3M3 5.500C4 2 6 1.500 8 2M21 5.500C20 2 18 1.500 16 2" /></Svg>
                    </span>
                    <T className="ml-[10px] w-[75px] text-[14px] text-[#111]">Periodicidad</T>
                    <Dots className="ml-auto mr-[13px]" />
                  </div>
                  <div className="mt-[16px] ml-[12px] h-[12px] shrink-0 flex items-center text-[12px] text-[#605e5c]">
                    <T className="w-[5px] text-[#d13438]">*</T>
                    <T className="ml-[3px] w-[45px]">Intervalo</T>
                    <T className="ml-[233px] w-[5px] text-[#d13438]">*</T>
                    <T className="ml-[2px] w-[56px]">Frecuencia</T>
                  </div>
                  <div className="mt-[2px] ml-[14px] h-[29px] shrink-0 flex items-start text-[12px] text-[#111]">
                    <div className="w-[268px] h-[27px] border border-[#8a8886] flex items-center"><T className="ml-[10px] pt-[2px] w-[6px]">1</T></div>
                    <div className="ml-[18px] w-[284px] h-[29px] border border-[#8a8886] flex items-center">
                      <T className="ml-[10px] w-[17px]">Día</T>
                      <ChevDown className="ml-auto mr-[19px] w-4 h-4 text-[#2266ff]" sw={2} />
                    </div>
                  </div>
                  <div className="ml-[13px] flex flex-col">
                    <Field label="Zona horaria" lw="w-[67px]" height="h-[29px]" gap="mt-[8px]">
                      <T className="ml-[11px] w-[232px]">(UTC-05:00) Bogotá, Lima, Quito, Río Branco</T>
                      <ChevDown className="ml-auto mr-[19px] size-4 text-[#2266ff]" sw={2} />
                    </Field>
                    <Field label="Hora de inicio" lw="w-[73px]" height="h-[27px]" gap="mt-[8px]">
                      <T className="ml-[10px] mt-[2px] w-[166px] text-[#8f8d8b]">Ejemplo: 2017-03-24T15:00:00Z</T>
                    </Field>
                    <Field label="A estas horas" lw="w-[69px]" height="h-[26px] rounded-[2px]" gap="mt-[8px]">
                      <T className="ml-[8px] w-[6px]">7</T>
                      <ChevDown className="ml-auto mr-[8px] size-4 text-[#555]" sw={1.6} />
                    </Field>
                    <Field label="En estos minutos" lw="w-[89px]" height="h-[27px]" gap="mt-[8px]">
                      <T className="ml-[11px] mt-[2px] w-[13px]">25</T>
                    </Field>
                    <div className="mt-[7px] w-[572px] h-[49px] shrink-0 border border-dashed border-black bg-[#e7e8f2] text-[#323130]">
                      <T className="ml-[6px] mt-[9px] w-[73px] text-[14px] font-semibold">Vista previa</T>
                      <T className="ml-[6px] mt-[5px] w-[182px] text-[12px]">Se ejecuta a las 7:25 todos los días</T>
                    </div>
                    <div className="mt-[21px] ml-[4px] flex items-center text-[12px] text-[#2266ff]">
                      <T className="w-[147px]">Ocultar opciones avanzadas</T>
                      <ChevUp className="ml-[9px] w-[12px] h-[12px] text-[#444]" sw={1.6} />
                    </div>
                  </div>
                </div>
                {steps.map(([title, width, tile, body, help, icon]) => (
                  <React.Fragment key={title}>
                    <FlowArrow />
                    <Step title={title} width={width} tile={tile} body={body} help={help} icon={icon} />
                  </React.Fragment>
                ))}
              </div>
            </div>
            <div className="w-[17px] shrink-0 bg-[#f1f1f1] flex flex-col items-center">
              <svg viewBox="0 0 8 5" className="mt-[7px] w-2 h-[5px] shrink-0"><path d="M4 0l4 5H0z" fill="#8c8c8c" /></svg>
              <span className="mt-[5px] w-[13px] h-[489px] shrink-0 bg-[#c1c1c1]" />
              <svg viewBox="0 0 8 5" className="mt-auto mb-[7px] w-[7px] h-[5px] shrink-0"><path d="M4 5l4-5H0z" fill="#505050" /></svg>
            </div>
          </div>
        </div>
      </div>

      <div className="h-[30px] shrink-0 flex items-center bg-[#1d1d1d] text-white">
        <Win className="ml-[10px] size-4" />
        <Loupe className="ml-5 size-4" sw={2.4} />
        <TaskView className="ml-5 size-4" />
        <div className="ml-[12px] h-full flex"><TaskApps /></div>
        <T className="ml-auto mr-[9px] w-[52px] text-[12px]">2:48 p. m.</T>
      </div>
    </div>
  );
}

export default function App() {
  return (
    <div className="w-[3520px] h-[1080px] flex items-start overflow-hidden bg-black font-['Open_Sans','Noto_Sans',sans-serif]">
      <ClickUpScreen />
      <PowerAutomateScreen />
    </div>
  );
}
